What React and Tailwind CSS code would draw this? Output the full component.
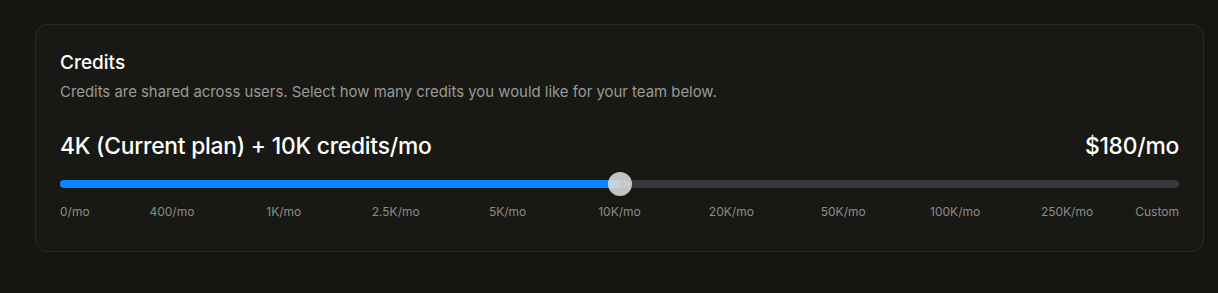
import { useState } from 'react';

const steps = ['0/mo', '400/mo', '1K/mo', '2.5K/mo', '5K/mo', '10K/mo', '20K/mo', '50K/mo', '100K/mo', '250K/mo', 'Custom'];

export default function App() {
  const [value] = useState(50);

  return (
    <div className="min-h-[293px] w-full bg-[#151511] pl-[35px] pr-[14px] pt-[24px] font-['Inter',sans-serif]">
      <section className="rounded-xl border border-[#2a2a26] bg-[#181814] px-6 pb-[31px] pt-[26px]">
        <h2 className="text-[19px] font-medium leading-6 text-white">Credits</h2>
        <p className="mt-[7px] text-[14.9px] leading-5 text-[#9a9a96]">
          Credits are shared across users. Select how many credits you would like for your team below.
        </p>

        <div className="mt-[30px] flex items-center justify-between text-[22.8px] font-medium leading-7 tracking-[-0.01em] text-white">
          <span>4K (Current plan) + 10K credits/mo</span>
          <span>$180/mo</span>
        </div>

        <div className="relative mt-[12px] h-6">
          <div className="absolute inset-x-0 top-2 h-2 rounded-full bg-[#37393f]" />
          <div className="absolute left-0 top-2 h-2 rounded-full bg-[#0a84ff]" style={{ width: `${value}%` }} />
          <div
            className="absolute top-0 h-6 w-6 -translate-x-1/2 rounded-full bg-[#e2e2e2]/85"
            style={{ left: `${value}%` }}
          />
        </div>

        <div className="mt-[8px] flex justify-between text-xs leading-4 text-[#8c8c88]">
          {steps.map((s, i) => (
            <div
              key={s}
              className={
                i === 0
                  ? 'flex w-0 justify-start whitespace-nowrap'
                  : i === steps.length - 1
                    ? 'flex w-0 justify-end whitespace-nowrap'
                    : 'flex w-0 justify-center whitespace-nowrap'
              }
            >
              <span>{s}</span>
            </div>
          ))}
        </div>
      </section>
    </div>
  );
}
